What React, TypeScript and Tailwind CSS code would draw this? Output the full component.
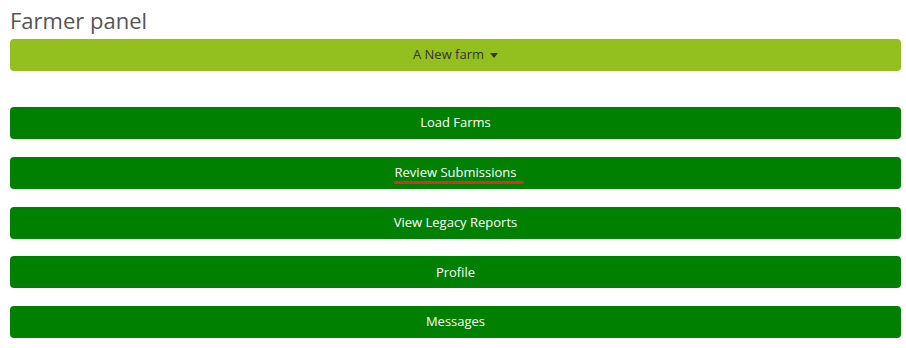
import React from "react";

const items = ["Load Farms", "Review Submissions", "View Legacy Reports", "Profile", "Messages"];

function PanelButton({ label }: { label: string }) {
  const marked = label === "Review Submissions";
  return (
    <button className="h-[32px] w-full rounded-[4px] bg-[#008000] text-[13px] font-medium text-white">
      <span className="relative">
        {label}
        {marked && (
          <span className="absolute left-[-1px] right-[-8px] top-[18px] h-[3px] rounded-full bg-[#d0312d]" />
        )}
      </span>
    </button>
  );
}

export default function App() {
  return (
    <div
      className="min-h-[348px] bg-white px-[10px] pr-[5px]"
      style={{ fontFamily: '"Open Sans", "DejaVu Sans", sans-serif' }}
    >
      <h1 className="pt-[5px] text-[22px] leading-[30px] text-[#555555]">Farmer panel</h1>
      <div className="mt-[4px] flex h-[32px] w-full items-center justify-center rounded-[4px] bg-[#93c01f] text-[13px] text-[#333333]">
        A New farm
        <svg className="ml-[6px]" width="8" height="5" viewBox="0 0 8 5">
          <path d="M0 0h8L4 5z" fill="#333333" />
        </svg>
      </div>
      <div className="mt-[36px] flex flex-col gap-[17.75px]">
        {items.map((l) => (
          <PanelButton key={l} label={l} />
        ))}
      </div>
    </div>
  );
}
